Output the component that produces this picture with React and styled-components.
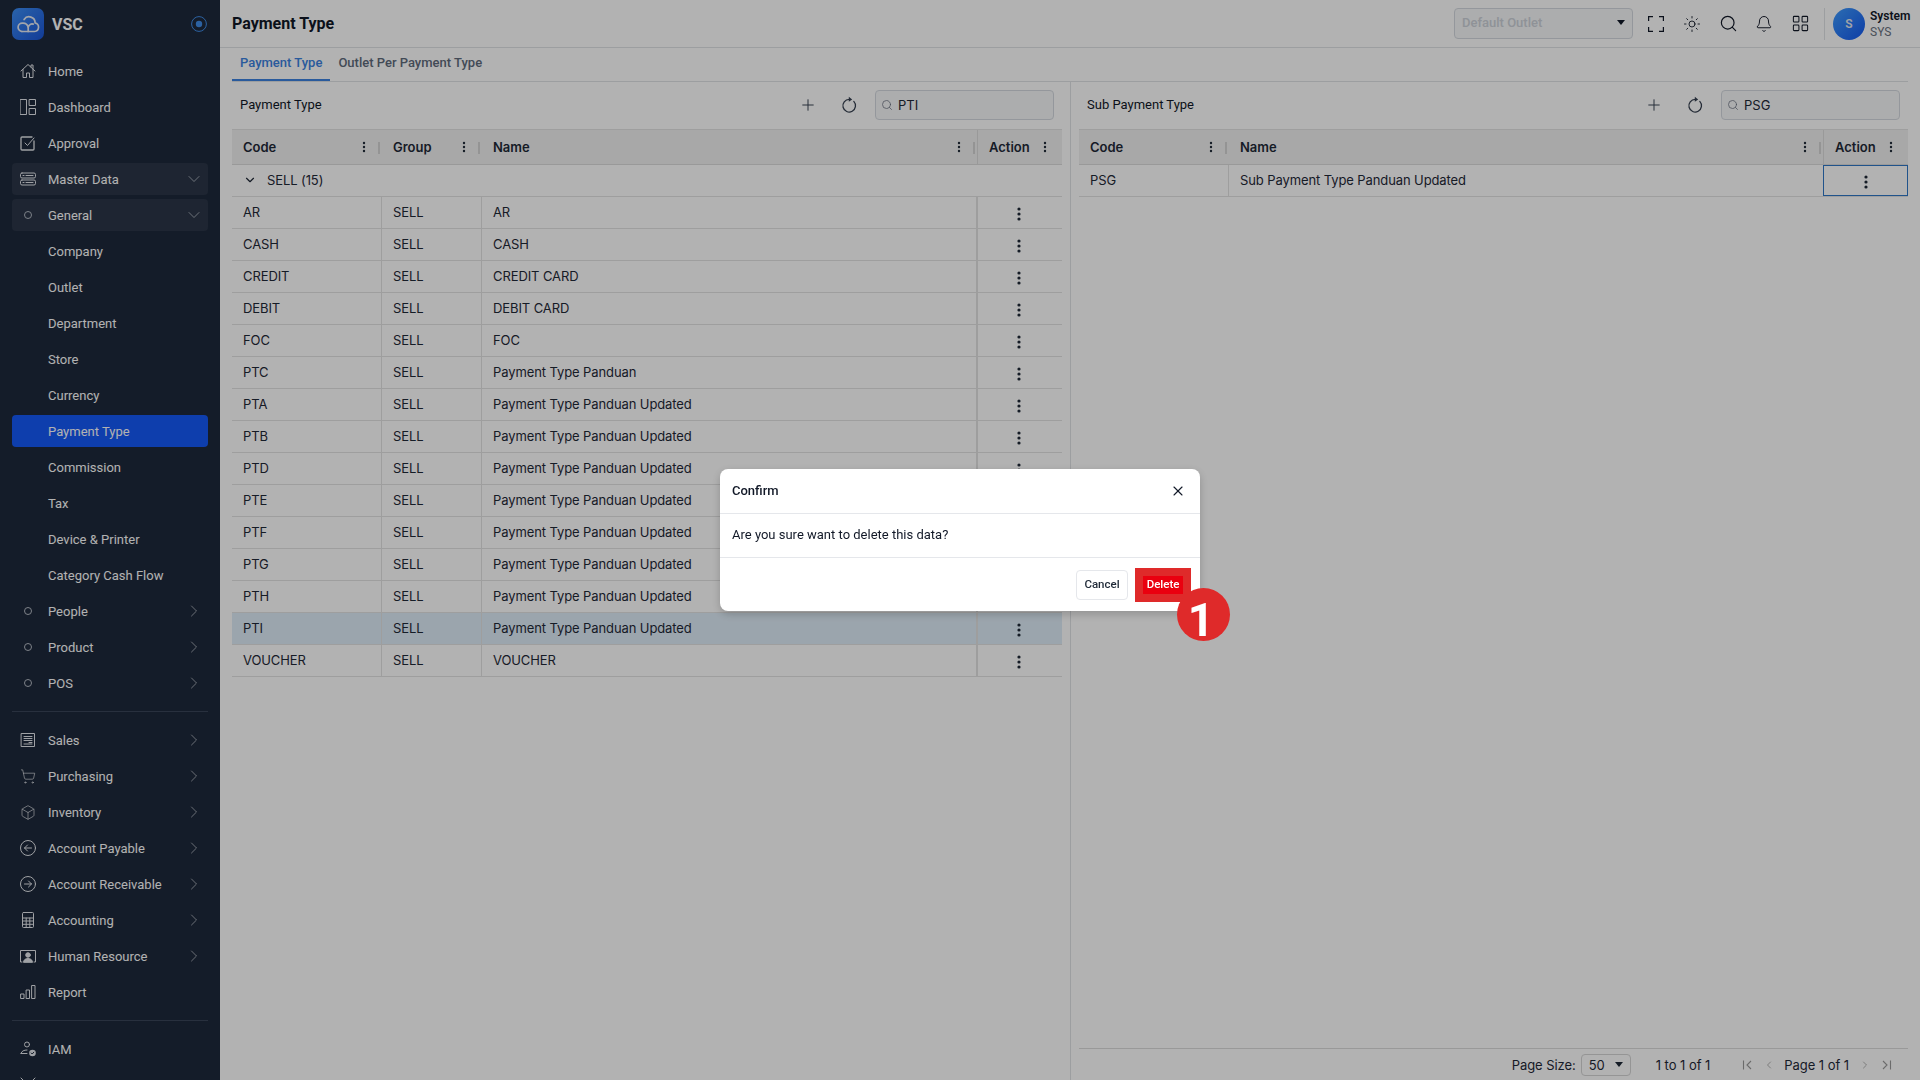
import styled, { createGlobalStyle } from "styled-components";
import { Bell, Box, ChevronDown, ChevronLeft, ChevronRight, LayoutGrid, Plus, Search, ShoppingCart, Sun, X } from "lucide-react";

const GlobalStyle = createGlobalStyle`
  html, body { margin: 0; height: 100%; background: #fff; overflow: hidden; }
  body { font-family: "Roboto", "Liberation Sans", sans-serif; font-size: 13px; color: #111827; }
  * { box-sizing: border-box; }
`;

const Shell = styled.div`
  display: flex;
  height: 100vh;
  overflow: hidden;
`;

/* ---- sidebar ---- */
const Sidebar = styled.aside`
  width: 220px;
  flex: none;
  height: 100vh;
  overflow: hidden;
  background: #1e293b;
  color: #fff;
`;

const Brand = styled.div`
  display: flex;
  align-items: center;
  height: 48px;
  padding: 0 13px 0 12px;
  margin-bottom: 7px;
`;

const LogoBox = styled.div`
  width: 32px;
  height: 32px;
  border-radius: 7px;
  background: linear-gradient(135deg, #3d8ff5, #1a55d8);
  display: flex;
  align-items: center;
  justify-content: center;
`;

const BrandName = styled.div`
  margin-left: 8px;
  font-size: 16px;
  font-weight: 700;
  flex: 1;
`;

const Nav = styled.nav`
  display: flex;
  flex-direction: column;
  gap: 4px;
  padding: 0 12px;
`;

const NavItem = styled.div`
  display: flex;
  align-items: center;
  flex: none;
  height: 32px;
  padding: 0 4px 0 8px;
  border-radius: 4px;
  font-size: 13px;
  font-weight: 400;
  background: ${(p) => (p.$active ? "#1559f8" : p.$open ? "#2b3648" : "transparent")};
`;

const NavIcon = styled.span`
  width: 16px;
  height: 16px;
  margin-right: 12px;
  flex: none;
  display: flex;
  align-items: center;
  justify-content: center;
  color: #e4e7ec;
`;

const Bullet = styled.span`
  width: 8px;
  height: 8px;
  border-radius: 50%;
  border: 1px solid #b4bac4;
`;

const NavLabel = styled.span`
  flex: 1;
  white-space: nowrap;
`;

const NavDivider = styled.div`
  height: 1px;
  background: #3a4659;
  margin: 8px 0;
`;

/* ---- main ---- */
const Main = styled.main`
  flex: 1;
  min-width: 0;
  display: flex;
  flex-direction: column;
  height: 100vh;
`;

const TopBar = styled.header`
  display: flex;
  align-items: center;
  height: 48px;
  flex: none;
  padding: 0 12px;
  border-bottom: 1px solid #e0e2e5;
`;

const PageTitle = styled.h1`
  margin: 0;
  flex: 1;
  font-size: 16px;
  font-weight: 700;
  color: #111827;
`;

const OutletSelect = styled.div`
  width: 179px;
  height: 31px;
  display: flex;
  align-items: center;
  justify-content: space-between;
  padding: 0 7px 2px;
  border: 1px solid #d5d9e0;
  border-radius: 4px;
  background: #f6f8f9;
  color: #cdd2d9;
  font-weight: 500;
  font-size: 13px;
`;

const Caret = styled.span`
  width: 0;
  height: 0;
  border-left: 4px solid transparent;
  border-right: 4px solid transparent;
  border-top: 5px solid ${(p) => p.$color || "#111827"};
`;

const TopIcons = styled.div`
  display: flex;
  align-items: center;
  margin-left: 5px;
`;

const TopIcon = styled.span`
  width: 36px;
  height: 32px;
  display: flex;
  align-items: center;
  justify-content: center;
  color: #111827;
`;

const TopDivider = styled.span`
  width: 1px;
  height: 32px;
  background: #e0e2e5;
  margin: 0 8px 0 6px;
`;

const Avatar = styled.div`
  width: 32px;
  height: 32px;
  border-radius: 50%;
  background: linear-gradient(135deg, #3f9dff, #1458ef);
  color: #e6e9f0;
  font-size: 12px;
  font-weight: 600;
  display: flex;
  align-items: center;
  justify-content: center;
`;

const UserBox = styled.div`
  margin-left: 5px;
  line-height: 16px;
  font-size: 12px;
  width: 38px;
`;

const UserName = styled.div`
  font-weight: 600;
  color: #111827;
`;

const UserCode = styled.div`
  color: #6b7280;
`;

const Tabs = styled.div`
  display: flex;
  height: 34px;
  flex: none;
  margin: 0 12px;
  border-bottom: 1px solid #e0e2e5;
`;

const Tab = styled.div`
  padding: 0 8px;
  height: 33px;
  line-height: 30px;
  font-weight: 500;
  font-size: 13px;
  color: ${(p) => (p.$active ? "#3b82e0" : "#5f6b7c")};
  border-bottom: 2px solid ${(p) => (p.$active ? "#3b82e0" : "transparent")};
`;

const Panels = styled.div`
  flex: 1;
  min-height: 0;
  display: flex;
  padding: 0 12px;
`;

const Panel = styled.section`
  flex: 1 1 50%;
  min-width: 0;
  display: flex;
  flex-direction: column;
  padding: ${(p) => (p.$right ? "0 0 0 8px" : "0 8px 0 0")};
  border-left: ${(p) => (p.$right ? "1px solid #e0e2e5" : "none")};
`;

const Toolbar = styled.div`
  display: flex;
  align-items: center;
  gap: 12px;
  height: 47px;
  flex: none;
  padding: 0 8px 2px;
`;

const ToolbarTitle = styled.div`
  flex: 1;
  font-size: 13px;
  color: #111827;
`;

const ToolButton = styled.span`
  width: 29px;
  height: 28px;
  display: flex;
  align-items: center;
  justify-content: center;
  color: #374151;
`;

const SearchBox = styled.div`
  width: 179px;
  height: 30px;
  display: flex;
  align-items: center;
  gap: 5px;
  padding: 0 5px;
  border: 1px solid #d5d9e0;
  border-radius: 4px;
  background: #f6f8f9;
  font-family: "Inter", sans-serif;
  font-size: 13px;
  color: #1f2937;
  svg { color: #6b7280; }
`;

const Row = styled.div`
  display: grid;
  grid-template-columns: ${(p) => p.$cols};
  height: 32px;
  flex: none;
  border-bottom: 1px solid #e2e2e2;
  background: ${(p) => (p.$selected ? "#dfedf8" : "transparent")};
  font-family: "Inter", sans-serif;
  font-size: 13px;
  letter-spacing: -0.1px;
  color: #1f2937;
`;

const HeadRow = styled(Row)`
  height: 36px;
  border-top: 1px solid #e2e2e2;
  border-bottom: 1px solid #dcdcdc;
  background: #f1f1f1;
  font-weight: 600;
  letter-spacing: 0;
`;

const HeadCell = styled.div`
  position: relative;
  display: flex;
  align-items: center;
  justify-content: space-between;
  padding: 0 ${(p) => (p.$last ? "15px" : "16px")} 0 11px;
  border-left: ${(p) => (p.$edge ? "1px solid #dcdcdc" : "none")};
  &::after {
    content: "";
    display: ${(p) => (p.$last ? "none" : "block")};
    position: absolute;
    right: 2px;
    top: 12px;
    width: 2px;
    height: 12px;
    background: #d4d4d4;
  }
`;

const Cell = styled.div`
  display: flex;
  align-items: center;
  padding: 0 11px 2px;
  border-right: ${(p) => (p.$last ? "none" : "1px solid #e2e2e2")};
  white-space: nowrap;
`;

const ActionCell = styled(Cell)`
  justify-content: center;
  padding: 2px ${(p) => (p.$gap ? "3px" : "0")} 0 0;
  border-left: ${(p) => (p.$gap ? "1px solid #e2e2e2" : "none")};
  outline: ${(p) => (p.$focused ? "1px solid #2f78c8" : "none")};
  outline-offset: -1px;
`;

const GroupRow = styled.div`
  display: flex;
  align-items: center;
  height: 32px;
  flex: none;
  padding: 0 0 2px 11px;
  gap: 10px;
  border-bottom: 1px solid #e2e2e2;
  font-family: "Inter", sans-serif;
  font-size: 13px;
  letter-spacing: -0.1px;
  color: #1f2937;
`;

const Spacer = styled.div`
  flex: 1;
`;

const Pager = styled.div`
  display: flex;
  align-items: center;
  justify-content: flex-end;
  height: 32px;
  flex: none;
  padding-right: 10px;
  border-top: 1px solid #dcdcdc;
  font-family: "Inter", sans-serif;
  font-size: 13px;
  letter-spacing: -0.05px;
  color: #1f2937;
`;

const PageSize = styled.div`
  width: 50px;
  height: 22px;
  margin: 0 25px 0 5px;
  padding: 0 7px;
  display: flex;
  align-items: center;
  justify-content: space-between;
  border: 1px solid #d6d6d6;
  border-radius: 4px;
`;

const PagerNav = styled.span`
  display: flex;
  align-items: center;
  justify-content: center;
  width: 22px;
  color: #9a9a9a;
  margin-left: ${(p) => p.$left || "0"};
`;

const PageLabel = styled.span`
  margin: 0 1px 0 4px;
`;

/* ---- confirm dialog ---- */
const Overlay = styled.div`
  position: fixed;
  inset: 0;
  background: rgba(0, 0, 0, 0.3);
  display: flex;
  align-items: center;
  justify-content: center;
`;

const Dialog = styled.div`
  width: 480px;
  height: 142px;
  background: #fff;
  border-radius: 8px;
  box-shadow: 0 3px 10px rgba(0, 0, 0, 0.2);
  display: flex;
  flex-direction: column;
`;

const DialogHead = styled.div`
  height: 45px;
  flex: none;
  display: flex;
  align-items: center;
  justify-content: space-between;
  padding: 0 14px 0 12px;
  border-bottom: 1px solid #e5e7eb;
  font-size: 13px;
  font-weight: 500;
  color: #111827;
`;

const DialogTitle = styled.span`
  margin-bottom: 2px;
`;

const DialogBody = styled.div`
  height: 44px;
  flex: none;
  display: flex;
  align-items: center;
  padding: 0 12px 2px;
  border-bottom: 1px solid #e5e7eb;
  font-size: 13px;
  color: #111827;
`;

const DialogFoot = styled.div`
  flex: 1;
  display: flex;
  align-items: center;
  justify-content: flex-end;
  gap: 7px;
  padding-right: 9px;
`;

const CancelButton = styled.button`
  width: 52px;
  height: 30px;
  padding: 0 0 2px;
  border: 1px solid #e5e7eb;
  border-radius: 4px;
  background: #fff;
  color: #1f2937;
  font: 500 11.5px "Roboto", sans-serif;
`;

const DeleteButton = styled.button`
  position: relative;
  width: 56px;
  height: 34px;
  padding: 0;
  border: none;
  background: #df2a2a;
  display: flex;
  align-items: center;
  justify-content: center;
`;

const DeleteLabel = styled.span`
  width: 40px;
  height: 18px;
  background: #ea000f;
  color: #fff;
  font: 500 11.5px/16px "Roboto", sans-serif;
`;

const StepBadge = styled.span`
  position: absolute;
  left: 42px;
  top: 20px;
  width: 53px;
  height: 53px;
  padding-right: 5px;
  border-radius: 50%;
  background: #df2a2a;
  color: #fff;
  font: 700 46px/64px "Roboto", sans-serif;
  text-align: center;
`;

const stroke = { fill: "none", stroke: "currentColor", strokeWidth: 1, strokeLinecap: "round", strokeLinejoin: "round" };

const Svg = ({ children, size = 16 }) => (
  <svg width={size} height={size} viewBox="0 0 16 16" {...stroke}>{children}</svg>
);

const HomeIcon = () => (
  <Svg><path d="M1 8l7-6.5L15 8M11 4V2h2v4M3 6.5v8h3.5V10h3v4.5H13v-8" /></Svg>
);
const DashboardIcon = () => (
  <Svg><rect x="0.5" y="0.5" width="6" height="15" /><rect x="9.5" y="0.5" width="6" height="6" /><rect x="9.5" y="9.5" width="6" height="6" /></Svg>
);
const ApprovalIcon = () => (
  <Svg><path d="M14 6v8a1 1 0 0 1-1 1H2a1 1 0 0 1-1-1V3a1 1 0 0 1 1-1h10" strokeWidth="1.3" /><path d="M5 8l2.5 2.5L14 3" /></Svg>
);
const ServerIcon = () => (
  <Svg><rect x="0.5" y="2" width="15" height="5" rx="1.5" /><rect x="0.5" y="9" width="15" height="5" rx="1.5" /><path d="M3 4.5h1M3 11.5h1M6 4.5h7M6 11.5h7" /></Svg>
);
const SalesIcon = () => (
  <Svg><rect x="1.5" y="1.5" width="13" height="13" /><path d="M4 4.5h8M4 6.5h8M4 8.5h8M9 10.5h3M4 12h8" /></Svg>
);
const CalcIcon = () => (
  <Svg><rect x="2.5" y="0.5" width="11" height="15" rx="1" /><path d="M2.5 6h11M2.5 9h11M2.5 12.3h11M6.2 6v9.5M9.8 6v9.5" /></Svg>
);
const HumanIcon = () => (
  <Svg><path d="M2 14H0.5V2.5h15V14H14" /><circle cx="8" cy="7" r="2.3" fill="currentColor" /><path d="M3.5 14c.5-2.6 2.2-3.5 4.5-3.5s4 .9 4.5 3.5z" fill="currentColor" /></Svg>
);
const ReportIcon = () => (
  <Svg><rect x="1" y="10" width="3" height="4.5" /><rect x="6.5" y="6" width="3" height="8.5" /><rect x="12" y="1.5" width="3" height="13" /></Svg>
);
const IamIcon = () => (
  <Svg>
    <circle cx="7" cy="3.5" r="2.5" />
    <path d="M1 12.5c.5-2.5 3-3.5 6-3.5" />
    <path d="M1 12.5h6" />
    <circle cx="12.5" cy="12" r="3.3" fill="currentColor" stroke="none" />
    <path d="M11.2 12l1 1 1.6-1.8" stroke="#1e293b" />
  </Svg>
);
const CircleArrow = ({ dir }) => (
  <Svg>
    <circle cx="8" cy="8" r="7.5" />
    {dir === "left" ? <path d="M11.5 8h-7M7.5 5l-3 3 3 3" /> : <path d="M4.5 8h7M8.5 5l3 3-3 3" />}
  </Svg>
);
const ToolsIcon = () => (
  <Svg><path d="M1 1l5 5M15 1l-5 5M3 13l10-10" /></Svg>
);

const navIcons = {
  home: <HomeIcon />,
  dashboard: <DashboardIcon />,
  approval: <ApprovalIcon />,
  server: <ServerIcon />,
  sales: <SalesIcon />,
  cart: <ShoppingCart size={17} strokeWidth={1} />,
  box: <Box size={17} strokeWidth={1} />,
  left: <CircleArrow dir="left" />,
  right: <CircleArrow dir="right" />,
  calc: <CalcIcon />,
  human: <HumanIcon />,
  report: <ReportIcon />,
  iam: <IamIcon />,
  tools: <ToolsIcon />,
  bullet: <Bullet />,
};

const CHEV = {
  down: <ChevronDown size={20} strokeWidth={0.9} color="#c3c8d0" />,
  right: <ChevronRight size={20} strokeWidth={0.9} color="#c3c8d0" />,
};

const menu = [
  { label: "Home", icon: "home" },
  { label: "Dashboard", icon: "dashboard" },
  { label: "Approval", icon: "approval" },
  { label: "Master Data", icon: "server", chev: "down", open: true },
  { label: "General", icon: "bullet", chev: "down", open: true },
  { label: "Company" },
  { label: "Outlet" },
  { label: "Department" },
  { label: "Store" },
  { label: "Currency" },
  { label: "Payment Type", active: true },
  { label: "Commission" },
  { label: "Tax" },
  { label: "Device & Printer" },
  { label: "Category Cash Flow" },
  { label: "People", icon: "bullet", chev: "right" },
  { label: "Product", icon: "bullet", chev: "right" },
  { label: "POS", icon: "bullet", chev: "right" },
  { divider: true },
  { label: "Sales", icon: "sales", chev: "right" },
  { label: "Purchasing", icon: "cart", chev: "right" },
  { label: "Inventory", icon: "box", chev: "right" },
  { label: "Account Payable", icon: "left", chev: "right" },
  { label: "Account Receivable", icon: "right", chev: "right" },
  { label: "Accounting", icon: "calc", chev: "right" },
  { label: "Human Resource", icon: "human", chev: "right" },
  { label: "Report", icon: "report" },
  { divider: true },
  { label: "IAM", icon: "iam" },
  { icon: "tools" },
];

const LEFT_COLS = "150px 100px 495px 85px";
const RIGHT_COLS = "150px 594px 85px";

const paymentRows = [
  ["AR", "AR"],
  ["CASH", "CASH"],
  ["CREDIT", "CREDIT CARD"],
  ["DEBIT", "DEBIT CARD"],
  ["FOC", "FOC"],
  ["PTC", "Payment Type Panduan"],
  ["PTA", "Payment Type Panduan Updated"],
  ["PTB", "Payment Type Panduan Updated"],
  ["PTD", "Payment Type Panduan Updated"],
  ["PTE", "Payment Type Panduan Updated"],
  ["PTF", "Payment Type Panduan Updated"],
  ["PTG", "Payment Type Panduan Updated"],
  ["PTH", "Payment Type Panduan Updated"],
  ["PTI", "Payment Type Panduan Updated"],
  ["VOUCHER", "VOUCHER"],
];

const Dots = ({ big }) => (
  <svg width="4" height={big ? 14 : 12} viewBox={big ? "0 0 4 14" : "0 0 4 12"} fill="#1f2937">
    {big
      ? [2, 7, 12].map((cy) => <circle key={cy} cx="2" cy={cy} r="1.6" />)
      : [2, 6, 10].map((cy) => <circle key={cy} cx="2" cy={cy} r="1.2" />)}
  </svg>
);

const RefreshIcon = () => (
  <svg width="18" height="18" viewBox="0 0 18 18" fill="none" stroke="currentColor" strokeWidth="1.3" strokeLinecap="round">
    <path d="M9.2 3.4a6.3 6.3 0 1 0 4.6 2" />
    <path d="M8.8 0.8l3.4 2.6-3.4 2.4z" fill="currentColor" stroke="none" />
  </svg>
);

const ExpandIcon = () => (
  <svg width="16" height="16" viewBox="0 0 16 16" fill="none" stroke="currentColor" strokeWidth="1.2">
    <path d="M0.6 5V0.6H5M11 0.6h4.4V5M15.4 11v4.4H11M5 15.4H0.6V11" />
  </svg>
);

const LastIcon = () => (
  <svg width="10" height="10" viewBox="0 0 10 10" fill="none" stroke="currentColor" strokeWidth="1.1">
    <path d="M1 1l4 4-4 4M8.5 0.5v9" />
  </svg>
);

const FirstIcon = () => (
  <svg width="10" height="10" viewBox="0 0 10 10" fill="none" stroke="currentColor" strokeWidth="1.1">
    <path d="M9 1L5 5l4 4M1.5 0.5v9" />
  </svg>
);

const Logo = () => (
  <svg width="24" height="18" viewBox="0 0 24 18" fill="none" stroke="#e8edf5" strokeWidth="1.7" strokeLinecap="round" strokeLinejoin="round">
    <path d="M6 16.5h12.5a4.3 4.3 0 0 0 .6-8.5 6 6 0 0 0-11-3.5" />
    <path d="M6 16.5a4.2 4.2 0 1 1 .6-8.4c3-.2 5 2 5.6 4 .6-2 2.6-3.6 5-3" />
    <path d="M12.2 12v4.5" />
  </svg>
);

const Toggle = () => (
  <svg width="16" height="16" viewBox="0 0 16 16" fill="none">
    <circle cx="8" cy="8" r="7.4" stroke="#3f8de8" strokeWidth="1" />
    <circle cx="8" cy="8" r="3.2" fill="#3f8de8" />
  </svg>
);

const App = () => (
  <>
    <GlobalStyle />
    <Shell>
      <Sidebar>
        <Brand>
          <LogoBox><Logo /></LogoBox>
          <BrandName>VSC</BrandName>
          <Toggle />
        </Brand>
        <Nav>
          {menu.map((item, i) =>
            item.divider ? (
              <NavDivider key={i} />
            ) : (
              <NavItem key={i} $active={item.active} $open={item.open}>
                <NavIcon>{navIcons[item.icon]}</NavIcon>
                <NavLabel>{item.label}</NavLabel>
                {item.chev && CHEV[item.chev]}
              </NavItem>
            )
          )}
        </Nav>
      </Sidebar>

      <Main>
        <TopBar>
          <PageTitle>Payment Type</PageTitle>
          <OutletSelect>Default Outlet<Caret /></OutletSelect>
          <TopIcons>
            <TopIcon><ExpandIcon /></TopIcon>
            <TopIcon><Sun size={18} strokeWidth={1.2} /></TopIcon>
            <TopIcon><Search size={19} strokeWidth={1.5} /></TopIcon>
            <TopIcon><Bell size={18} strokeWidth={1.3} /></TopIcon>
            <TopIcon><LayoutGrid size={19} strokeWidth={1.3} /></TopIcon>
          </TopIcons>
          <TopDivider />
          <Avatar>S</Avatar>
          <UserBox>
            <UserName>System</UserName>
            <UserCode>SYS</UserCode>
          </UserBox>
        </TopBar>

        <Tabs>
          <Tab $active>Payment Type</Tab>
          <Tab>Outlet Per Payment Type</Tab>
        </Tabs>

        <Panels>
          <Panel>
            <Toolbar>
              <ToolbarTitle>Payment Type</ToolbarTitle>
              <ToolButton><Plus size={18} strokeWidth={1.3} /></ToolButton>
              <ToolButton><RefreshIcon /></ToolButton>
              <SearchBox><Search size={12} strokeWidth={1.5} />PTI</SearchBox>
            </Toolbar>
            <HeadRow $cols={LEFT_COLS}>
              <HeadCell>Code<Dots /></HeadCell>
              <HeadCell>Group<Dots /></HeadCell>
              <HeadCell>Name<Dots /></HeadCell>
              <HeadCell $last $edge>Action<Dots /></HeadCell>
            </HeadRow>
            <GroupRow>
              <ChevronDown size={14} strokeWidth={2} />
              SELL (15)
            </GroupRow>
            {paymentRows.map(([code, name]) => (
              <Row key={code} $cols={LEFT_COLS} $selected={code === "PTI"}>
                <Cell>{code}</Cell>
                <Cell>SELL</Cell>
                <Cell>{name}</Cell>
                <ActionCell $last $gap><Dots big /></ActionCell>
              </Row>
            ))}
          </Panel>

          <Panel $right>
            <Toolbar>
              <ToolbarTitle>Sub Payment Type</ToolbarTitle>
              <ToolButton><Plus size={18} strokeWidth={1.3} /></ToolButton>
              <ToolButton><RefreshIcon /></ToolButton>
              <SearchBox><Search size={12} strokeWidth={1.5} />PSG</SearchBox>
            </Toolbar>
            <HeadRow $cols={RIGHT_COLS}>
              <HeadCell>Code<Dots /></HeadCell>
              <HeadCell>Name<Dots /></HeadCell>
              <HeadCell $last $edge>Action<Dots /></HeadCell>
            </HeadRow>
            <Row $cols={RIGHT_COLS}>
              <Cell>PSG</Cell>
              <Cell $last>Sub Payment Type Panduan Updated</Cell>
              <ActionCell $last $focused><Dots big /></ActionCell>
            </Row>
            <Spacer />
            <Pager>
              Page Size:
              <PageSize>50<Caret $color="#1f2937" /></PageSize>
              1 to 1 of 1
              <PagerNav $left="26px"><FirstIcon /></PagerNav>
              <PagerNav><ChevronLeft size={12} strokeWidth={1.5} /></PagerNav>
              <PageLabel>Page 1 of 1</PageLabel>
              <PagerNav $left="4px"><ChevronRight size={12} strokeWidth={1.5} /></PagerNav>
              <PagerNav><LastIcon /></PagerNav>
            </Pager>
          </Panel>
        </Panels>
      </Main>
    </Shell>

    <Overlay>
      <Dialog>
        <DialogHead>
          <DialogTitle>Confirm</DialogTitle>
          <X size={16} strokeWidth={1.6} />
        </DialogHead>
        <DialogBody>Are you sure want to delete this data?</DialogBody>
        <DialogFoot>
          <CancelButton>Cancel</CancelButton>
          <DeleteButton>
            <DeleteLabel>Delete</DeleteLabel>
            <StepBadge>1</StepBadge>
          </DeleteButton>
        </DialogFoot>
      </Dialog>
    </Overlay>
  </>
);

export default App;
